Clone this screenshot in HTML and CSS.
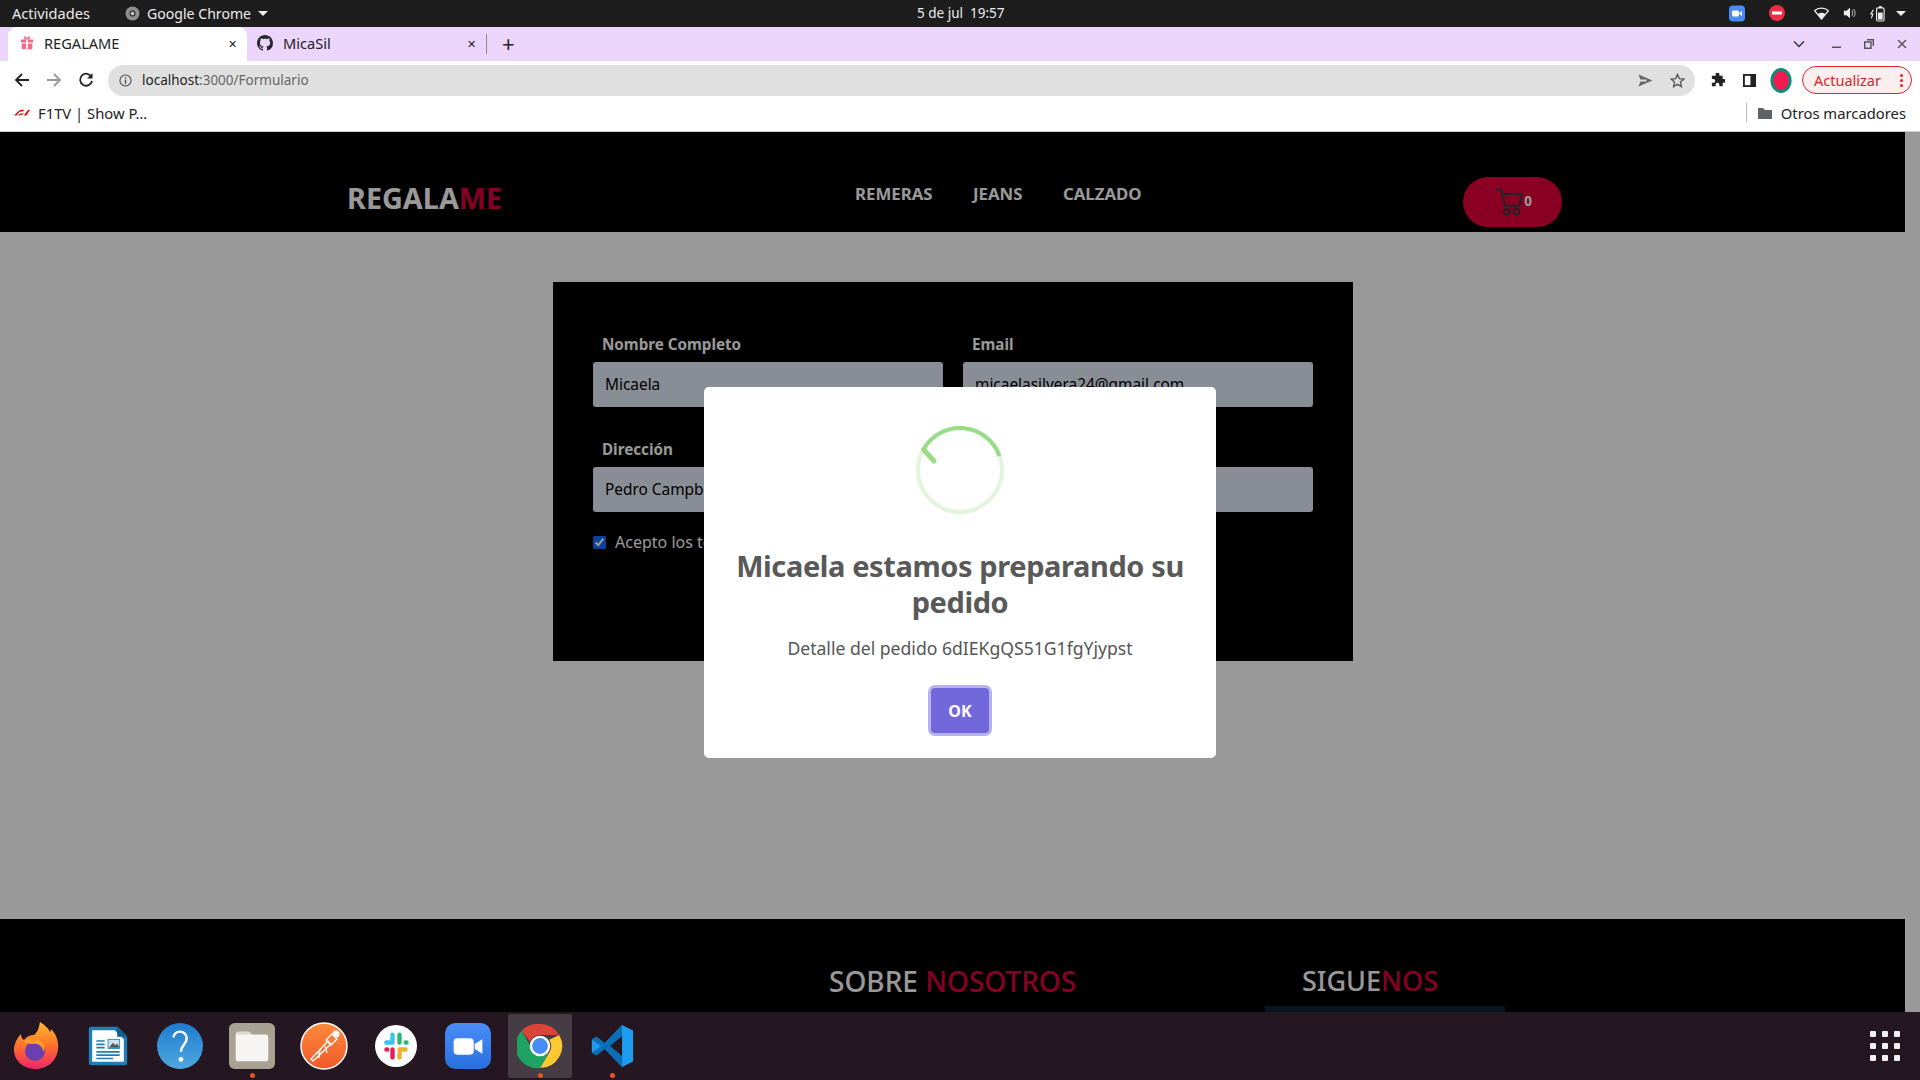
FILE: index.html
```html
<!DOCTYPE html>
<html lang="es">

<head>
  <meta charset="UTF-8">
  <title>REGALAME</title>
  <link rel="stylesheet" href="styles.css">
</head>

<body>
  <!-- barra de gnome -->
  <div class="topbar">
    <span class="activities">Actividades</span>
    <span class="app-menu">
      <svg class="app-icon" viewBox="0 0 16 16" width="15" height="15"><circle cx="8" cy="8" r="7.500" fill="#8f8f8f"/><circle cx="8" cy="8" r="3.200" fill="#1d1d1d"/><circle cx="8" cy="8" r="2.200" fill="#bbb"/></svg>
      Google Chrome
      <i class="caret"></i>
    </span>
    <span class="clock">5 de jul&nbsp; 19:57</span>
    <span class="tray">
      <svg class="tray-zoom" viewBox="0 0 16 16" width="16" height="17"><rect width="16" height="16" rx="4" fill="#4a8cf7"/><rect x="3" y="5" width="7" height="6" rx="1.5" fill="#fff"/><path d="M10.5 7.5 13 5.5v5l-2.5-2z" fill="#fff"/></svg>
      <svg class="tray-stop" viewBox="0 0 16 16" width="16" height="16"><circle cx="8" cy="8" r="8" fill="#ef2b45"/><rect x="3" y="6.5" width="10" height="3" fill="#fff"/></svg>
      <svg class="tray-wifi" viewBox="0 0 16 14" width="15" height="13"><path d="M8 13 .5 4C4.500.2 11.500.2 15.500 4z" fill="none" stroke="#eee" stroke-width="1.4"/><path d="M8 13 4 7.500c2.300-1.800 5.700-1.800 8 0z" fill="#eee"/></svg>
      <svg class="tray-vol" viewBox="0 0 16 16" width="14" height="14"><path d="M1 5.500h3L8 2v12l-4-3.500H1z" fill="#eee"/><path d="M10 5c1.500 1.500 1.500 4.500 0 6M12 3.500c2.500 2.500 2.500 6.500 0 9" fill="none" stroke="#aaa" stroke-width="1.200"/></svg>
      <svg class="tray-bat" viewBox="0 0 16 18" width="15" height="17"><path d="M3.500 5 1 9.500h2L1.500 14" fill="none" stroke="#eee" stroke-width="1.200"/><rect x="7" y="3" width="8" height="14" rx="1.500" fill="none" stroke="#eee" stroke-width="1.200"/><rect x="9.500" y="1" width="3" height="2" fill="#eee"/><rect x="8.500" y="8" width="5" height="7.500" fill="#eee"/></svg>
      <i class="caret caret-tray"></i>
    </span>
  </div>

  <!-- pestañas -->
  <div class="tabstrip">
    <div class="tab tab-active">
      <svg class="tab-icon" viewBox="0 0 16 16" width="14" height="14"><path d="M1 4h14v3.500H1zM2 8.500h12V15H2z" fill="#f06a8b"/><path d="M8 4C5 4 4 1 5.500 1S8 4 8 4s1-3 2.500-3S11 4 8 4z" fill="none" stroke="#f06a8b" stroke-width="1.200"/><rect x="7" y="4" width="2" height="11" fill="#fff"/></svg>
      <span class="tab-title">REGALAME</span>
      <span class="tab-close">✕</span>
    </div>
    <div class="tab">
      <svg class="tab-icon" viewBox="0 0 16 16" width="16" height="16"><path fill="#24292f" d="M8 0C3.580 0 0 3.580 0 8c0 3.540 2.290 6.530 5.470 7.590.4.070.55-.17.55-.38 0-.19-.01-.82-.01-1.490-2.010.37-2.530-.49-2.690-.94-.09-.23-.48-.94-.82-1.130-.28-.15-.68-.52-.01-.53.63-.01 1.080.58 1.230.82.720 1.210 1.870.87 2.330.66.070-.52.280-.87.510-1.070-1.780-.2-3.640-.89-3.640-3.950 0-.87.310-1.590.820-2.150-.08-.2-.36-1.020.080-2.120 0 0 .67-.21 2.200.82.640-.18 1.320-.27 2-.27s1.360.09 2 .27c1.530-1.040 2.200-.82 2.200-.82.440 1.100.160 1.920.080 2.120.51.560.820 1.270.820 2.150 0 3.070-1.870 3.750-3.650 3.950.29.250.54.730.54 1.480 0 1.070-.01 1.930-.01 2.200 0 .21.150.46.550.38A8.010 8.010 0 0 0 16 8c0-4.420-3.580-8-8-8z"/></svg>
      <span class="tab-title">MicaSil</span>
      <span class="tab-close">✕</span>
    </div>
    <span class="tab-sep"></span>
    <span class="tab-new">+</span>
    <span class="window-btns">
      <svg viewBox="0 0 12 8" width="12" height="8" class="win-list"><path d="M1 1.500 6 6.500l5-5" fill="none" stroke="#333" stroke-width="1.500"/></svg>
      <svg viewBox="0 0 10 10" width="10" height="10" class="win-min"><rect y="7.500" width="9" height="1.500" fill="#555"/></svg>
      <svg viewBox="0 0 10 10" width="10" height="10" class="win-max"><path d="M3 .7h6.300V7M.7 3h6.300v6.300H.7z" fill="none" stroke="#555" stroke-width="1.400"/></svg>
      <svg viewBox="0 0 10 10" width="10" height="10" class="win-close"><path d="M1 1l8 8M9 1l-8 8" stroke="#555" stroke-width="1.500"/></svg>
    </span>
  </div>

  <!-- barra de direcciones -->
  <div class="toolbar">
    <svg class="nav-icon" viewBox="0 0 16 16" width="16" height="16"><path d="M15 8H2M8 2 2 8l6 6" fill="none" stroke="#222" stroke-width="1.800"/></svg>
    <svg class="nav-icon" viewBox="0 0 16 16" width="16" height="16"><path d="M1 8h13M8 2l6 6-6 6" fill="none" stroke="#999" stroke-width="1.800"/></svg>
    <svg class="nav-icon" viewBox="0 0 16 16" width="16" height="16"><path d="M13.500 5A6 6 0 1 0 14 9" fill="none" stroke="#222" stroke-width="1.800"/><path d="M14.500 1v5.500H9z" fill="#222"/></svg>
    <div class="urlbar">
      <svg class="url-info" viewBox="0 0 14 14" width="13" height="13"><circle cx="7" cy="7" r="6" fill="none" stroke="#444" stroke-width="1.100"/><rect x="6.300" y="6" width="1.400" height="4.500" fill="#444"/><rect x="6.300" y="3.500" width="1.400" height="1.400" fill="#444"/></svg>
      <span class="url-text">localhost<span class="url-path">:3000/Formulario</span></span>
      <svg class="url-send" viewBox="0 0 16 14" width="15" height="13"><path d="M.5.500 15.500 7 .5 13.500 2.500 8H9V6H2.500z" fill="#666"/></svg>
      <svg class="url-star" viewBox="0 0 16 16" width="15" height="15"><path d="M8 1.500l2 4.500 4.800.5-3.600 3.200 1 4.800L8 12.100l-4.200 2.400 1-4.800L1.200 6.500 6 6z" fill="none" stroke="#555" stroke-width="1.400"/></svg>
    </div>
    <svg class="tool-puzzle" viewBox="0 0 16 16" width="15" height="15"><path d="M6 1.500a2 2 0 0 1 4 0V3h3.500v3.500H15a2 2 0 0 1 0 4h-1.500V14H10v-1.500a2 2 0 0 0-4 0V14H2v-3.500h1.500a2 2 0 0 0 0-4H2V3h4z" fill="#222"/></svg>
    <svg class="tool-panel" viewBox="0 0 14 14" width="13" height="13"><rect width="14" height="14" fill="#222"/><rect x="2" y="2" width="6" height="10" fill="#fff"/></svg>
    <svg class="tool-avatar" viewBox="0 0 22 26" width="22" height="25"><ellipse cx="11" cy="13" rx="11" ry="13" fill="#0b8c7a"/><ellipse cx="11" cy="13" rx="8" ry="10" fill="#f3194f"/></svg>
    <span class="update-pill">Actualizar<span class="update-dots"><i></i><i></i><i></i></span></span>
  </div>

  <!-- marcadores -->
  <div class="bookmarks">
    <svg class="f1-logo" viewBox="0 0 18 7" width="16" height="7"><path d="M0 7 5 2Q6.500.5 9 .5h3L9.500 2.500H8Q6.500 2.500 5.500 3.500L3 7zM4.500 7 7 4.500h4L9.500 6H7.500L6.500 7zM11 7l5-6.500h2L14 7z" fill="#e10600"/></svg>
    <span class="bm-title">F1TV | Show P…</span>
    <span class="bm-sep"></span>
    <svg class="bm-folder" viewBox="0 0 14 12" width="14" height="12"><path d="M0 1h5l2 2h7v9H0z" fill="#5f6368"/></svg>
    <span class="bm-others">Otros marcadores</span>
  </div>

  <!-- pagina -->
  <div class="viewport">
    <div class="page">
      <header class="site-nav">
        <a class="logo">REGALA<span class="red">ME</span></a>
        <nav class="site-links">
          <a>REMERAS</a>
          <a>JEANS</a>
          <a>CALZADO</a>
        </nav>
        <button class="cart-btn">
          <svg viewBox="0 0 28 26" width="31" height="28"><path d="M1 1.500h5l4 15h13l2.500-11H7" fill="none" stroke="#3a3a3a" stroke-width="1.800"/><rect x="9" y="19.500" width="5" height="5" rx="2" fill="none" stroke="#3a3a3a" stroke-width="1.700"/><rect x="18" y="19.500" width="5" height="5" rx="2" fill="none" stroke="#3a3a3a" stroke-width="1.700"/></svg>
          <span class="cart-count">0</span>
        </button>
      </header>

      <main class="main">
        <form class="order-form">
          <div class="field">
            <label>Nombre Completo</label>
            <input class="input" type="text" value="Micaela">
          </div>
          <div class="field">
            <label>Email</label>
            <input class="input" type="text" value="micaelasilvera24@gmail.com">
          </div>
          <div class="field">
            <label>Dirección</label>
            <input class="input" type="text" value="Pedro Campbell">
          </div>
          <div class="field">
            <label>&nbsp;</label>
            <input class="input" type="text" value="">
          </div>
          <div class="check-row">
            <input class="check" type="checkbox" checked>
            <span>Acepto los términos y condiciones</span>
          </div>
        </form>
      </main>

      <footer class="site-footer">
        <div class="foot-col foot-about">
          <h3>SOBRE <span class="red">NOSOTROS</span></h3>
        </div>
        <div class="foot-col foot-follow">
          <h3>SIGUE<span class="red">NOS</span></h3>
          <div class="foot-box"></div>
        </div>
      </footer>
    </div>

    <div class="overlay"></div>
    <div class="modal">
      <svg class="spinner" viewBox="0 0 88 88" width="88" height="88">
        <circle cx="44" cy="44" r="42" fill="none" stroke="#e3f5dc" stroke-width="4"/>
        <path d="M7.600 23A42 42 0 0 1 83.500 30" fill="none" stroke="#98dc87" stroke-width="4"/>
        <path d="M7.500 23.500 18 35" fill="none" stroke="#98dc87" stroke-width="5" stroke-linecap="round"/>
      </svg>
      <h2 class="modal-title">Micaela estamos preparando su pedido</h2>
      <p class="modal-text">Detalle del pedido 6dIEKgQS51G1fgYjypst</p>
      <button class="modal-ok">OK</button>
    </div>
  </div>

  <!-- dock -->
  <div class="dock">
    <div class="dock-item">
      <svg viewBox="0 0 48 48" width="48" height="52"><defs><linearGradient id="ff" x1="0" y1="0" x2="0" y2="1"><stop offset="0" stop-color="#ffbd2e"/><stop offset=".55" stop-color="#ff6a2c"/><stop offset="1" stop-color="#f0246c"/></linearGradient></defs><path d="M24 47C10 47 1 37 2 26 3 19 7 14 9 12c0 3 1 5 3 6 3-4 7-5 10-5C27 9 27 4 28 0c6 4 9 7 10 10 1-1 1-2 1-3 5 5 8 12 7 20-1 11-10 20-22 20z" fill="url(#ff)"/><circle cx="23" cy="29" r="10" fill="#6b3fb0"/><path d="M11 20c5-4 13-5 19 0 3 3 3 7 1 10 0-5-4-9-10-8-4 0-7-1-10-2z" fill="#ff9a2e"/></svg>
    </div>
    <div class="dock-item dock-libre">
      <svg viewBox="0 0 48 48" width="40" height="52"><path d="M4 1h30l13 13v30a3 3 0 0 1-3 3H4a3 3 0 0 1-3-3V4a3 3 0 0 1 3-3z" fill="#1f7fb5"/><path d="M5 5h27l11 11v27H5z" fill="#fff"/><path d="M35 0l13 13H35z" fill="#135f8a"/><rect x="24" y="16" width="14" height="11" fill="#cfe3ee" stroke="#1f7fb5"/><path d="M25 26l5-6 3 3 2-2 3 5z" fill="#555"/><path d="M10 18h10M10 22h10M10 26h10M10 31h28M10 35h28M10 39h20" stroke="#1f7fb5" stroke-width="2"/></svg>
    </div>
    <div class="dock-item">
      <svg viewBox="0 0 48 48" width="46" height="50"><defs><linearGradient id="hlp" x1="0" y1="0" x2="0" y2="1"><stop offset="0" stop-color="#1f7cd0"/><stop offset="1" stop-color="#4fa8e0"/></linearGradient></defs><circle cx="24" cy="24" r="24" fill="url(#hlp)"/><path d="M17 15c1-4 4-6 7-6 4 0 7 3 7 7 0 6-6 7-6 14" fill="none" stroke="#fff" stroke-width="2.500"/><circle cx="25" cy="38" r="2.500" fill="#fff"/></svg>
    </div>
    <div class="dock-item dock-running">
      <svg viewBox="0 0 48 48" width="46" height="50"><rect width="48" height="48" rx="6" fill="#a9a292"/><path d="M7 12q0-3 3-3h11l3 3h14q3 0 3 3v22q0 3-3 3H10q-3 0-3-3z" fill="#f6f5f3"/><path d="M7 12q0-3 3-3h11l3 3z" fill="#ddd9d0"/></svg>
    </div>
    <div class="dock-item">
      <svg viewBox="0 0 48 48" width="48" height="50"><defs><linearGradient id="pm" x1="0" y1="0" x2="0" y2="1"><stop offset="0" stop-color="#ff8b3c"/><stop offset="1" stop-color="#f0592a"/></linearGradient></defs><circle cx="24" cy="24" r="23" fill="url(#pm)" stroke="#fff" stroke-width="1.500"/><path d="M11 37 28 19l3 3-18 17z" fill="none" stroke="#fff" stroke-width="1.300"/><path d="M26 18l6-6 5 5-6 6z" fill="none" stroke="#fff" stroke-width="1.300"/><circle cx="36" cy="12" r="3.500" fill="#fff"/><path d="M20 27l-1 9M25 24l2 7M17 31l3 1" stroke="#fff" stroke-width="1.300"/></svg>
    </div>
    <div class="dock-item">
      <svg viewBox="0 0 48 48" width="42" height="44"><circle cx="24" cy="24" r="24" fill="#fff"/><g stroke-width="5" stroke-linecap="round"><path d="M20 11v6M13 20h7" stroke="#36c5f0"/><path d="M28 11v9M35 20h1" stroke="#2eb67d"/><path d="M28 37v-6M35 28h-7" stroke="#ecb22e"/><path d="M20 37v-9M13 28h1" stroke="#e01e5a"/></g></svg>
    </div>
    <div class="dock-item">
      <svg viewBox="0 0 48 48" width="46" height="50"><defs><linearGradient id="zm" x1="0" y1="0" x2="0" y2="1"><stop offset="0" stop-color="#4a8cf7"/><stop offset="1" stop-color="#2a6fe0"/></linearGradient></defs><rect width="48" height="48" rx="11" fill="url(#zm)"/><rect x="9" y="16" width="21" height="17" rx="4" fill="#fff"/><path d="M31 22l8-5v15l-8-5z" fill="#fff"/></svg>
    </div>
    <div class="dock-item dock-active dock-running">
      <svg viewBox="0 0 48 48" width="46" height="50"><path d="M24 1a23 23 0 0 1 20 11.500H24a11.500 11.500 0 0 0-10.500 7L5 8A23 23 0 0 1 24 1z" fill="#db4437"/><path d="M44 12.500A23 23 0 0 1 24 47l10-17a11.500 11.500 0 0 0-.5-12.500z" fill="#fcc934"/><path d="M5 8l10 18a11.500 11.500 0 0 0 19 4L24 47A23 23 0 0 1 5 8z" fill="#1ea362"/><circle cx="24" cy="24" r="9.500" fill="#4a8cf7" stroke="#fff" stroke-width="2.500"/></svg>
    </div>
    <div class="dock-item dock-running">
      <svg viewBox="0 0 48 48" width="44" height="50"><path d="M35 1 47 7v34l-12 6L16 27l-9 7-5-3V17l5-3 9 7z" fill="#1f9cf0"/><path d="M35 1v46L16 27 7 34l-5-3 10-7L2 17l5-3 9 7z" fill="#0b6fb8"/><path d="M35 13 22 24l13 11z" fill="#241722"/></svg>
    </div>
    <div class="dock-apps">
      <i></i><i></i><i></i><i></i><i></i><i></i><i></i><i></i><i></i>
    </div>
  </div>
</body>

</html>
```

FILE: styles.css
```css
html,
body {
  height: 100%;
}

body {
  margin: 0;
  display: flex;
  flex-direction: column;
  height: 1080px;
  overflow: hidden;
  font-family: "Noto Sans", sans-serif;
  background: #fff;
}

h2,
h3,
p {
  margin: 0;
}

.red {
  color: #8c0027;
}

/* barra de gnome */
.topbar {
  position: relative;
  display: flex;
  align-items: center;
  flex: 0 0 27px;
  padding: 0 0 1px 12px;
  box-sizing: border-box;
  background: #1d1d1d;
  color: #ececec;
  font-size: 14.6px;
}

.activities {
  width: 113px;
}

.app-menu {
  display: flex;
  align-items: center;
  gap: 7px;
  font-size: 14.1px;
}

.caret {
  width: 0;
  height: 0;
  border-left: 5px solid transparent;
  border-right: 5px solid transparent;
  border-top: 5px solid #eee;
}

.clock {
  margin-left: 649px;
  font-size: 13.5px;
}

.tray {
  display: flex;
  align-items: center;
  margin-left: auto;
  padding-right: 14px;
}

.tray-stop {
  margin-left: 24px;
}

.tray-wifi {
  margin-left: 29px;
}

.tray-vol {
  margin-left: 14px;
}

.tray-bat {
  margin-left: 13px;
}

.caret-tray {
  margin-left: 11px;
}

/* pestañas */
.tabstrip {
  display: flex;
  align-items: center;
  flex: 0 0 34px;
  padding-left: 8px;
  background: #ecd5fb;
  font-size: 14.6px;
  color: #222;
}

.tab {
  display: flex;
  align-items: center;
  width: 239px;
  height: 34px;
  padding-bottom: 2px;
  box-sizing: border-box;
  padding-left: 12px;
}

.tab-active {
  background: #fff;
  border-radius: 9px 9px 0 0;
}

.tab:not(.tab-active) {
  padding-left: 10px;
}

.tab-icon {
  margin-right: 10px;
}

.tab-close {
  margin-left: auto;
  margin-right: 10px;
  font-size: 11px;
}

.tab-sep {
  width: 1px;
  height: 20px;
  background: #8a8a8a;
}

.tab-new {
  margin: -2px 0 0 15px;
  font-size: 22px;
  line-height: 1;
}

.window-btns {
  display: flex;
  align-items: center;
  margin-left: auto;
  padding-right: 13px;
}

.win-min {
  margin-left: 27px;
}

.win-max {
  margin-left: 22px;
}

.win-close {
  margin-left: 23px;
}

/* barra de direcciones */
.toolbar {
  display: flex;
  align-items: center;
  flex: 0 0 38px;
  padding-left: 14px;
  background: #fff;
}

.nav-icon {
  margin-right: 16px;
}

.urlbar {
  display: flex;
  align-items: center;
  width: 1587px;
  height: 31px;
  margin-left: -2px;
  padding-left: 11px;
  box-sizing: border-box;
  border-radius: 16px;
  background: #e0e0e0;
}

.url-text {
  margin-left: 10px;
  font-size: 13.5px;
  color: #222;
}

.url-path {
  color: #666;
}

.url-send {
  margin-left: auto;
}

.url-star {
  margin-left: 17px;
  margin-right: 10px;
}

.tool-puzzle {
  margin-left: 15px;
}

.tool-panel {
  margin-left: 18px;
}

.tool-avatar {
  margin-left: 14px;
}

.update-pill {
  display: flex;
  align-items: center;
  justify-content: space-between;
  width: 110px;
  height: 28px;
  margin-left: 10px;
  padding: 0 8px 0 11px;
  box-sizing: border-box;
  border: 1px solid #e2222f;
  border-radius: 14px;
  background: #fbeeee;
  color: #d81f2b;
  font-size: 14.5px;
}

.update-dots {
  display: flex;
  flex-direction: column;
  gap: 2px;
}

.update-dots i {
  width: 3px;
  height: 3px;
  border-radius: 50%;
  background: #e2222f;
}

/* marcadores */
.bookmarks {
  display: flex;
  align-items: center;
  flex: 0 0 33px;
  padding: 0 0 5px 14px;
  border-bottom: 1px solid #cfcfcf;
  box-sizing: border-box;
  background: #fff;
  font-size: 14.8px;
  color: #222;
}

.bm-title {
  margin-left: 8px;
}

.bm-sep {
  width: 1px;
  height: 19px;
  margin-left: auto;
  background: #bbb;
}

.bm-folder {
  margin-left: 11px;
}

.bm-others {
  margin-left: 9px;
  margin-right: 14px;
}

/* pagina */
.viewport {
  position: relative;
  flex: 1;
  overflow: hidden;
  background: #fff;
}

.page {
  display: flex;
  flex-direction: column;
  width: 1905px;
  height: 100%;
  background: #fff;
}

.site-nav {
  display: flex;
  align-items: flex-start;
  flex: 0 0 100px;
  padding-left: 347px;
  background: #000;
}

.logo {
  margin-top: 49px;
  width: 508px;
  font-size: 28.8px;
  font-weight: 700;
  line-height: 34px;
  color: #fff;
}

.logo .red {
  color: #e0003f;
}

.site-links {
  display: flex;
  gap: 40.5px;
  margin-top: 51px;
  width: 608px;
  font-size: 16.8px;
  font-weight: 700;
  line-height: 22px;
  color: #fff;
}

.cart-btn {
  display: flex;
  align-items: center;
  justify-content: center;
  width: 99px;
  height: 50px;
  margin-top: 45px;
  padding: 0 0 0 1px;
  border: none;
  border-radius: 25px;
  background: #e6003f;
  color: #fff;
  font-family: inherit;
}

.cart-count {
  margin: -2px 0 0 -1px;
  font-size: 13.5px;
  font-weight: 700;
}

.main {
  flex: 0 0 687px;
  padding-top: 50px;
  box-sizing: border-box;
  background: #fff;
}

.order-form {
  display: grid;
  grid-template-columns: 350px 350px;
  column-gap: 20px;
  align-content: start;
  row-gap: 31px;
  width: 800px;
  height: 379px;
  margin-left: 553px;
  padding: 51px 40px 0;
  box-sizing: border-box;
  background: #000;
}

.field label {
  display: block;
  height: 29px;
  padding-left: 9px;
  font-size: 15.2px;
  font-weight: 700;
  line-height: 22px;
  color: #fff;
}

.input {
  display: block;
  width: 100%;
  height: 45px;
  padding: 0 12px;
  box-sizing: border-box;
  border: none;
  border-radius: 3px;
  background: #e4ebf9;
  font-family: inherit;
  font-size: 15.4px;
  color: #000;
}

.check-row {
  grid-column: 1 / 3;
  display: flex;
  align-items: center;
  gap: 9px;
  margin-top: -12px;
  font-size: 16px;
  color: #fff;
}

.check {
  width: 13px;
  height: 13px;
  margin: 0;
  accent-color: #0d6efd;
}

.site-footer {
  display: flex;
  flex: 1;
  padding-left: 829px;
  background: #000;
}

.foot-col h3 {
  margin-top: 46px;
  font-size: 27px;
  font-weight: 500;
  line-height: 32px;
  color: #fff;
}

.foot-col .red {
  color: #e0003f;
}

.foot-about {
  width: 473px;
}

.foot-about h3 {
  font-size: 28px;
}

.foot-follow {
  display: flex;
  flex-direction: column;
  align-items: flex-start;
}

.foot-box {
  width: 240px;
  height: 10px;
  margin: 9px 0 0 -37px;
  background: #0a2435;
}

/* fondo del modal */
.overlay {
  position: absolute;
  top: 0;
  left: 0;
  right: 0;
  bottom: 0;
  background: rgba(0, 0, 0, 0.4);
}

.modal {
  position: absolute;
  top: 255px;
  left: 704px;
  width: 512px;
  height: 371px;
  padding-top: 39px;
  box-sizing: border-box;
  border-radius: 5px;
  background: #fff;
  text-align: center;
}

.spinner {
  display: block;
  margin: 0 auto;
}

.modal-title {
  width: 480px;
  margin: 34px auto 0;
  font-size: 29px;
  font-weight: 700;
  letter-spacing: -0.4px;
  line-height: 36px;
  color: #595959;
}

.modal-text {
  margin-top: 15px;
  font-size: 17.6px;
  line-height: 26px;
  color: #545454;
}

.modal-ok {
  display: block;
  width: 58px;
  height: 45px;
  margin: 27px auto 0;
  border: none;
  border-radius: 4px;
  background: #7367dc;
  box-shadow: 0 0 0 3px rgba(112, 102, 224, 0.5);
  color: #fff;
  font-family: inherit;
  font-size: 16px;
  font-weight: 700;
}

/* dock */
.dock {
  display: flex;
  align-items: center;
  flex: 0 0 68px;
  padding-left: 4px;
  background: #241722;
}

.dock-item {
  position: relative;
  display: flex;
  align-items: center;
  justify-content: center;
  width: 64px;
  height: 64px;
  margin-right: 8px;
  border-radius: 2px;
}

.dock-active {
  background: #453c44;
}

.dock-running::after {
  content: "";
  position: absolute;
  left: 30px;
  bottom: 0;
  width: 5px;
  height: 5px;
  border-radius: 50%;
  background: #e95420;
}

.dock-apps {
  display: grid;
  grid-template-columns: repeat(3, 6px);
  gap: 6px;
  margin-left: auto;
  margin-right: 20px;
}

.dock-apps i {
  width: 6px;
  height: 6px;
  border-radius: 1px;
  background: #f2f2f2;
}
```
